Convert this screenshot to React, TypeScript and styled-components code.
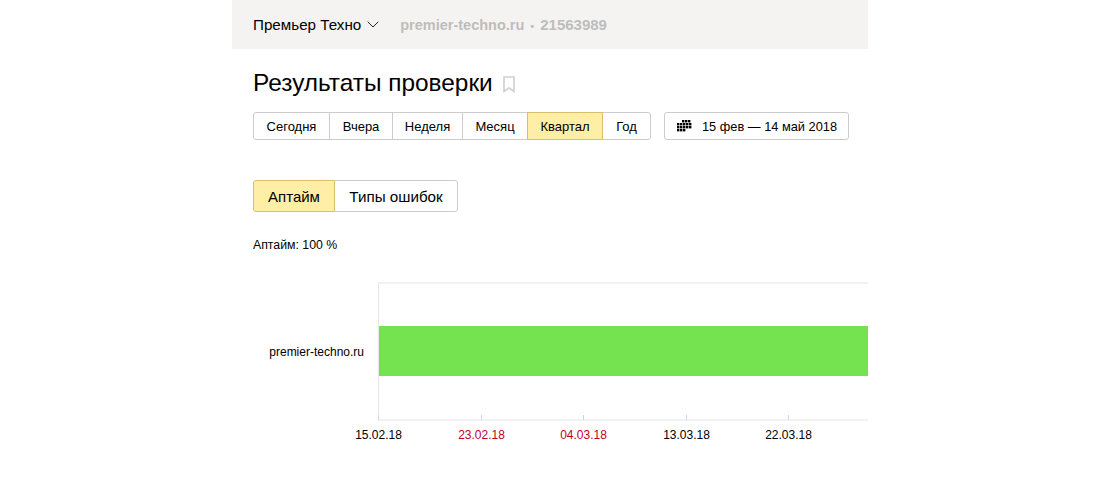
import styled, { createGlobalStyle } from "styled-components";

const GlobalStyle = createGlobalStyle`
  html, body {
    margin: 0;
    padding: 0;
    background: #fff;
  }
  body {
    font-family: "Liberation Sans", Arial, sans-serif;
    color: #000;
  }
`;

const Page = styled.div`
  width: 636px;
  height: 491px;
  margin: 0 auto;
  overflow: hidden;
`;
const Header = styled.header`
  height: 48px;
  padding: 0 0 1px 21px;
  display: flex;
  align-items: center;
  background: #f5f3f1;
  font-size: 15.2px;
`;
const CounterName = styled.span`
  color: #000;
`;
const Chevron = styled.svg`
  width: 12px;
  height: 7px;
  margin: 1px 0 0 6px;
`;
const CounterInfo = styled.span`
  margin-left: 21px;
  color: #bdbdbd;
  font-weight: 700;
  font-size: 14.5px;
`;
const Dot = styled.span`
  margin: 0 6px;
  font-size: 11px;
`;
const CounterId = styled.span`
  font-size: 15px;
`;
const Content = styled.main`
  padding: 20px 0 0 21px;
`;
const TitleRow = styled.div`
  display: flex;
  align-items: center;
  height: 28px;
`;
const Title = styled.h1`
  margin: 0;
  font-size: 24.4px;
  font-weight: 400;
  line-height: 28px;
`;
const Bookmark = styled.svg`
  width: 12px;
  height: 17px;
  margin: 3px 0 0 10px;
`;
const PeriodRow = styled.div`
  display: flex;
  gap: 13px;
  margin-top: 15px;
`;
const Group = styled.div`
  display: flex;
`;
const Segment = styled.button<{ $active?: boolean; $w: number; $h: number; $size: number }>`
  box-sizing: border-box;
  width: ${(p) => p.$w}px;
  height: ${(p) => p.$h}px;
  margin: 0 0 0 -1px;
  padding: 0;
  font: inherit;
  font-size: ${(p) => p.$size}px;
  color: #000;
  background: ${(p) => (p.$active ? "#ffeea5" : "#fff")};
  border: 1px solid ${(p) => (p.$active ? "#d9bf6c" : "#ccc")};
  position: relative;
  z-index: ${(p) => (p.$active ? 1 : 0)};
  &:first-child {
    margin-left: 0;
    border-radius: 3px 0 0 3px;
  }
  &:last-child {
    border-radius: 0 3px 3px 0;
  }
`;
const DateButton = styled.button`
  box-sizing: border-box;
  width: 185px;
  height: 28px;
  padding: 0 0 0 12px;
  display: flex;
  align-items: center;
  gap: 10px;
  font: inherit;
  font-size: 12.8px;
  color: #000;
  background: #fff;
  border: 1px solid #ccc;
  border-radius: 3px;
`;
const CalendarIcon = styled.svg`
  width: 15px;
  height: 12px;
`;
const TabsRow = styled.div`
  display: flex;
  margin-top: 40px;
`;
const Summary = styled.div`
  margin-top: 26px;
  font-size: 12.3px;
  line-height: 14px;
`;
const Chart = styled.svg`
  display: block;
  width: 615px;
  height: 170px;
  margin-top: 30px;
`;
const AxisLabel = styled.text<{ $holiday?: boolean }>`
  font-family: "Liberation Sans", Arial, sans-serif;
  font-size: 12px;
  fill: ${(p) => (p.$holiday ? "#c4001a" : "#000")};
`;

const periods = [
  { label: "Сегодня", w: 77 },
  { label: "Вчера", w: 64 },
  { label: "Неделя", w: 71 },
  { label: "Месяц", w: 66 },
  { label: "Квартал", w: 76, active: true },
  { label: "Год", w: 49 },
];

const ticks = [
  { x: 125, label: "15.02.18" },
  { x: 228, label: "23.02.18", holiday: true },
  { x: 330, label: "04.03.18", holiday: true },
  { x: 433, label: "13.03.18" },
  { x: 535, label: "22.03.18" },
];

const calendarDots = [
  [5, 0], [8, 0], [11, 0],
  [0, 3], [3, 3], [6, 3], [9, 3], [12, 3],
  [0, 6], [3, 6], [6, 6], [9, 6], [12, 6],
  [0, 9], [3, 9], [6, 9],
];

export default function App() {
  return (
    <Page>
      <GlobalStyle />
      <Header>
        <CounterName>Премьер Техно</CounterName>
        <Chevron viewBox="0 0 12 7" fill="none">
          <path d="M.7.7 6 6l5.3-5.3" stroke="#222" strokeWidth="1" />
        </Chevron>
        <CounterInfo>
          premier-techno.ru<Dot>•</Dot><CounterId>21563989</CounterId>
        </CounterInfo>
      </Header>
      <Content>
        <TitleRow>
          <Title>Результаты проверки</Title>
          <Bookmark viewBox="0 0 12 17" fill="none">
            <path d="M1 1h10v14.5l-5-3.6-5 3.6z" stroke="#cfcfcf" strokeWidth="1.6" />
          </Bookmark>
        </TitleRow>
        <PeriodRow>
          <Group>
            {periods.map((p) => (
              <Segment key={p.label} $w={p.w} $h={28} $size={13} $active={p.active}>
                {p.label}
              </Segment>
            ))}
          </Group>
          <DateButton>
            <CalendarIcon viewBox="0 0 15 12" fill="#000">
              {calendarDots.map(([x, y]) => (
                <rect key={`${x}-${y}`} x={x} y={y} width="2.4" height="2.4" />
              ))}
            </CalendarIcon>
            15 фев — 14 май 2018
          </DateButton>
        </PeriodRow>
        <TabsRow>
          <Segment $w={82} $h={32} $size={15} $active>
            Аптайм
          </Segment>
          <Segment $w={124} $h={32} $size={15.2}>
            Типы ошибок
          </Segment>
        </TabsRow>
        <Summary>Аптайм: 100 %</Summary>
        <Chart viewBox="0 0 615 170">
          <rect x="125" y="0.5" width="490" height="1" fill="#e6e6e6" />
          <rect x="125" y="0" width="1" height="138" fill="#e3e6ea" />
          <rect x="126" y="44" width="489" height="50" fill="#75e34f" />
          <rect x="125" y="137.5" width="490" height="1" fill="#e3e6ea" />
          <AxisLabel x="111" y="74" textAnchor="end">premier-techno.ru</AxisLabel>
          {ticks.map((t) => (
            <g key={t.label}>
              <rect x={t.x} y="133" width="1" height="5" fill="#ccd6eb" />
              <AxisLabel x={t.x + 0.5} y="157" textAnchor="middle" $holiday={t.holiday}>
                {t.label}
              </AxisLabel>
            </g>
          ))}
        </Chart>
      </Content>
    </Page>
  );
}
